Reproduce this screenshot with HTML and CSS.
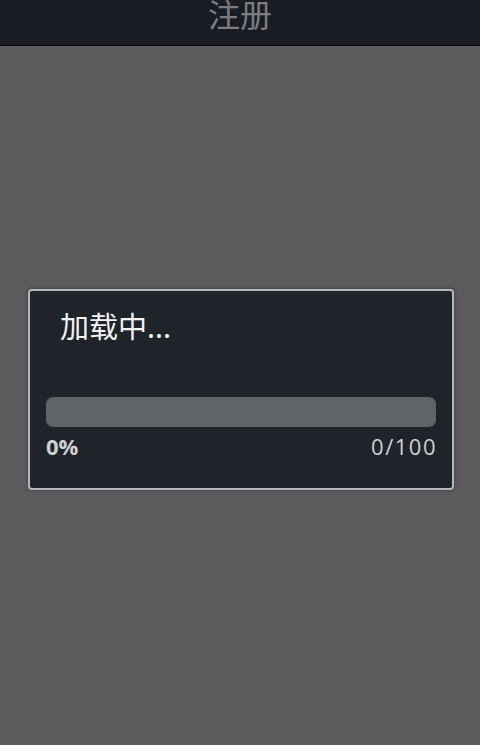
FILE: index.html
```html
<!DOCTYPE html>
<html lang="zh">
<head>
    <meta charset="UTF-8">
    <meta name="viewport" content="width=device-width, initial-scale=1.0">
    <title>注册</title>
    <link rel="stylesheet" href="styles.css">
</head>
<body>
    <div class="titlebar">
        <h1>注册</h1>
    </div>

    <div class="screen">
        <div class="dialog">
            <div class="dialog-title">加载中...</div>
            <div class="progress">
                <div class="progress-fill" style="width: 0%;"></div>
            </div>
            <div class="progress-info">
                <span class="percent">0%</span>
                <span class="count">0/100</span>
            </div>
        </div>
    </div>
</body>
</html>
```

FILE: styles.css
```css
body {
    margin: 0;
    padding: 0;
    width: 480px;
    height: 745px;
    overflow: hidden;
    background: #5d5b5e;
    font-family: "Open Sans", "Noto Sans CJK SC", sans-serif;
}

.titlebar {
    height: 45px;
    background: #1a1c24;
    border-bottom: 1px solid #050608;
    display: flex;
    justify-content: center;
    align-items: flex-start;
    overflow: hidden;
}
.titlebar h1 {
    margin: -7px 0 0 0;
    font-family: "Noto Sans CJK SC", sans-serif;
    font-size: 32px;
    font-weight: normal;
    line-height: 40px;
    color: #7c7d80;
}

.screen {
    padding: 243px 0 0 28px;
}

.dialog {
    width: 426px;
    height: 201px;
    box-sizing: border-box;
    background: #1f232a;
    border: 2px solid #b4b8bc;
    border-radius: 4px;
    box-shadow: 0 0 4px rgba(0, 0, 0, 0.35);
    padding: 0 16px;
}

.dialog-title {
    color: #f2f2f2;
    font-family: "Noto Sans CJK SC", sans-serif;
    font-size: 29px;
    line-height: 34px;
    margin: 17px 0 0 14px;
}

.progress {
    margin-top: 55px;
    height: 30px;
    border-radius: 7px;
    background: #5f6467;
    overflow: hidden;
}
.progress-fill {
    height: 100%;
    background: #33b5e5;
}

.progress-info {
    display: flex;
    justify-content: space-between;
    margin-top: 5px;
    font-size: 22px;
    line-height: 28px;
    color: #cfd0d1;
}
.percent {
    font-weight: bold;
}
.count {
    letter-spacing: 1.5px;
    margin-right: -1px;
}
```
